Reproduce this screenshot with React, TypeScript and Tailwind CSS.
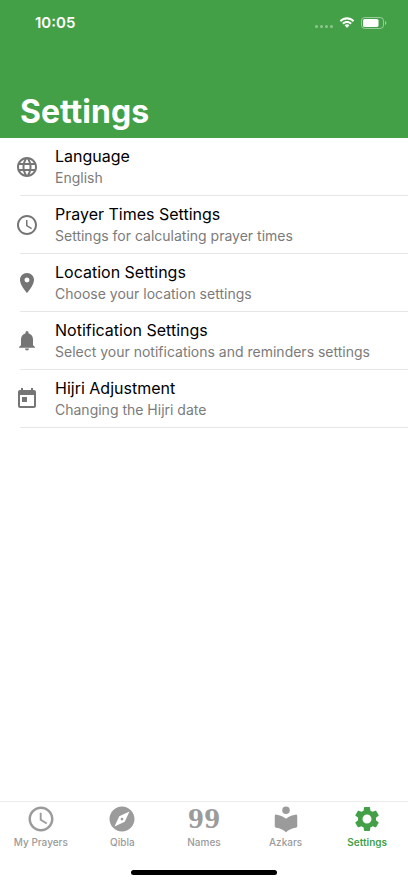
import React from "react";
import clsx from "clsx";
import {
  MdAccessTime,
  MdExplore,
  MdLanguage,
  MdPlace,
  MdSettings,
  MdToday,
} from "react-icons/md";

type IconProps = { size?: number; className?: string };

const BellIcon = ({ size = 24, className }: IconProps) => (
  <svg
    width={size}
    height={size}
    viewBox="0 0 24 24"
    fill="currentColor"
    className={className}
  >
    <path d="M18 16.300V10.500c0-3-1.700-5.400-4.500-6.200V3.500a1.500 1.500 0 0 0-3 0v.8C7.700 5.100 6 7.500 6 10.500v5.800L4 18v.7h16V18z" />
    <path d="M10 19.500c.1 1.200.9 2 2 2s1.900-.8 2-2z" />
  </svg>
);

const ReaderIcon = ({ size = 24, className }: IconProps) => (
  <svg
    width={size}
    height={size}
    viewBox="0 0 24 24"
    fill="currentColor"
    className={className}
  >
    <circle cx="12" cy="5" r="3" />
    <path d="M12 11.700C9.900 9.900 7 8.700 4.400 8.500 3.500 8.400 3 8.900 3 9.700v7.900c0 .8.500 1.300 1.300 1.400 2.800.4 5.500 1.600 7.700 3.600 2.200-2 4.900-3.200 7.700-3.600.8-.1 1.300-.6 1.300-1.400V9.700c0-.8-.5-1.300-1.400-1.200-2.600.2-5.500 1.400-7.600 3.200z" />
  </svg>
);

const NinetyNine = () => (
  <span className="flex h-[30px] items-center font-['DejaVu_Serif_Condensed','DejaVu_Serif',serif] text-[26px] font-bold">
    99
  </span>
);

const settings = [
  { title: "Language", subtitle: "English", icon: MdLanguage },
  {
    title: "Prayer Times Settings",
    subtitle: "Settings for calculating prayer times",
    icon: MdAccessTime,
  },
  {
    title: "Location Settings",
    subtitle: "Choose your location settings",
    icon: MdPlace,
  },
  {
    title: "Notification Settings",
    subtitle: "Select your notifications and reminders settings",
    icon: BellIcon,
  },
  {
    title: "Hijri Adjustment",
    subtitle: "Changing the Hijri date",
    icon: MdToday,
  },
];

const tabs = [
  { label: "My Prayers", icon: <MdAccessTime size={30} /> },
  { label: "Qibla", icon: <MdExplore size={30} /> },
  { label: "Names", icon: <NinetyNine /> },
  { label: "Azkars", icon: <ReaderIcon size={30} /> },
  { label: "Settings", icon: <MdSettings size={30} />, active: true },
];

const StatusBar = () => (
  <div className="flex h-[46px] items-center justify-between pl-[35px] pr-[21px]">
    <span className="text-[15px] font-semibold">10:05</span>
    <div className="flex items-center gap-1.5">
      <div className="flex gap-0.5 pt-1.5 opacity-40">
        <span className="size-[3px] rounded-full bg-white" />
        <span className="size-[3px] rounded-full bg-white" />
        <span className="size-[3px] rounded-full bg-white" />
        <span className="size-[3px] rounded-full bg-white" />
      </div>
      <svg width="16" height="12" viewBox="0 0 16 12" fill="currentColor">
        <path d="M8 2.500c2.100 0 4.100.8 5.600 2.300.1.1.3.1.4 0l1.100-1.100c.1-.1.1-.3 0-.5C11.100-.7 4.900-.7.900 3.200c-.1.2-.1.4 0 .5L2 4.800c.1.1.3.1.4 0C3.900 3.300 5.900 2.500 8 2.500z" />
        <path d="M8 6.100c1.200 0 2.300.4 3.100 1.200.1.1.3.1.5 0l1-1.100c.2-.1.2-.3 0-.5-2.600-2.400-6.600-2.400-9.200 0-.2.2-.2.4 0 .5l1 1.100c.2.1.4.1.5 0C5.700 6.500 6.800 6.100 8 6.100z" />
        <path d="M10.200 8.600c.1-.1.1-.3 0-.5-1.300-1.100-3.100-1.100-4.400 0-.1.2-.1.4 0 .5L7.800 10.800c.1.1.3.1.4 0z" />
      </svg>
      <svg width="26" height="12" viewBox="0 0 26 12" fill="none">
        <rect
          x="0.500"
          y="0.500"
          width="22"
          height="11"
          rx="3.200"
          stroke="currentColor"
          strokeOpacity="0.45"
        />
        <rect x="2" y="2" width="15.500" height="8" rx="1.600" fill="currentColor" />
        <path
          d="M24 4v4c.8-.3 1.300-1.100 1.300-2S24.800 4.300 24 4z"
          fill="currentColor"
          fillOpacity="0.5"
        />
      </svg>
    </div>
  </div>
);

const SettingsList = () => (
  <ul className="flex-1">
    {settings.map(({ title, subtitle, icon: Icon }) => (
      <li key={title}>
        <button
          type="button"
          className="flex w-full items-center pl-[15px] text-left"
        >
          <Icon size={24} className="shrink-0 text-[#757575]" />
          <span className="flex-1 pb-[7px] pl-4 pt-2">
            <span className="block text-base leading-5 text-black">
              {title}
            </span>
            <span className="mt-0.5 block text-sm leading-5 text-[#7b7b7b]">
              {subtitle}
            </span>
          </span>
        </button>
        <div className="ml-5 h-px bg-[#e6e6e6]" />
      </li>
    ))}
  </ul>
);

const TabBar = () => (
  <nav className="border-t border-[#ececec] bg-white">
    <div className="grid grid-cols-5 pt-0.5">
      {tabs.map(({ label, icon, active }) => (
        <button
          key={label}
          type="button"
          aria-current={active ? "page" : undefined}
          className={clsx(
            "flex flex-col items-center",
            active
              ? "font-semibold text-[#43a047]"
              : "font-medium text-[#9b9b9b]"
          )}
        >
          {icon}
          <span className="text-[10px] leading-4">{label}</span>
        </button>
      ))}
    </div>
    <div className="mx-auto mb-2 mt-5 h-[5px] w-[36%] rounded-full bg-black" />
  </nav>
);

const App = () => {
  return (
    <div className="flex min-h-screen flex-col bg-white font-[Inter,sans-serif]">
      <header className="bg-[#43a047] text-white">
        <StatusBar />
        <h1 className="px-5 pb-1.5 pt-[46px] text-[32px] font-bold leading-10">
          Settings
        </h1>
      </header>
      <SettingsList />
      <TabBar />
    </div>
  );
};

export default App;
